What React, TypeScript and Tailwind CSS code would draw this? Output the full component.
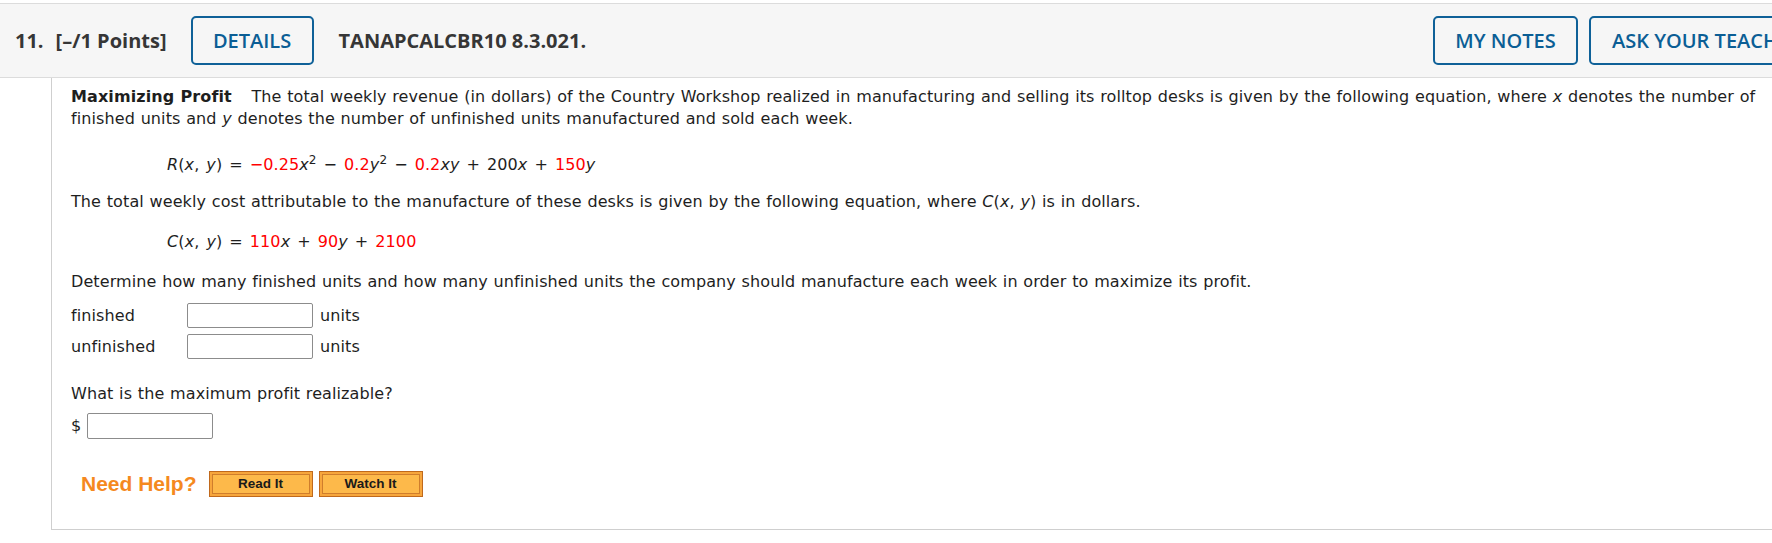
import React from "react";

function HelpButton({ label }: { label: string }) {
  return (
    <div className="h-[26px] w-[104px] border border-[#c0691c] bg-[#f7a63c] p-[2px]">
      <div className="flex h-full w-full items-center justify-center border border-[#cf7d2c] bg-[#fdb94a] text-[13.5px] font-bold leading-none text-[#1a1a1a]">
        {label}
      </div>
    </div>
  );
}

function Field({ label }: { label: string }) {
  return (
    <div className="flex items-center">
      <div className="w-[116px] leading-[22px]">{label}</div>
      <input
        type="text"
        readOnly
        className="h-[25px] w-[126px] rounded-[2px] border border-[#8c8c8c] bg-white outline-none"
      />
      <span className="ml-[7px] leading-[22px]">units</span>
    </div>
  );
}

const R = "text-[#ff0000]";

export default function App() {
  return (
    <div className="h-[543px] w-full overflow-hidden bg-white">
      <div className="w-[1900px] pt-[3px]">
        {/* Header bar */}
        <div className="flex h-[75px] items-center border-y border-[#dcdcdc] bg-[#f6f6f6] pl-[15px] pr-[61px] font-['Open_Sans',sans-serif] text-[20px] font-bold text-[#363636]">
          <span>11.</span>
          <span className="ml-[12px]">[–/1 Points]</span>
          <div className="ml-[24px] flex h-[49px] w-[123px] items-center justify-center rounded-[5px] border-2 border-[#0f6198] font-semibold text-[#0b5e95]">
            DETAILS
          </div>
          <span className="ml-[25px]">TANAPCALCBR10 8.3.021.</span>
          <div className="ml-auto flex gap-[11px] font-semibold text-[#0b5e95]">
            <div className="flex h-[49px] w-[145px] items-center justify-center rounded-[5px] border-2 border-[#0f6198]">
              MY NOTES
            </div>
            <div className="flex h-[49px] w-[250px] items-center whitespace-nowrap rounded-[5px] border-2 border-[#0f6198] pl-[21px]">
              ASK YOUR TEACHER
            </div>
          </div>
        </div>

        {/* Question body */}
        <div className="ml-[51px] border-b border-l border-[#cfcfcf] pb-[32px] pl-[19px] pt-[8px] font-['DejaVu_Sans',Verdana,sans-serif] text-[16px] leading-[22px] tracking-[0.1px] text-[#1e1e1e] [word-spacing:0.5px]">
          <p className="whitespace-nowrap">
            <b className="mr-[14px]">Maximizing Profit</b> The total weekly revenue (in dollars) of the Country
            Workshop realized in manufacturing and selling its rolltop desks is given by the following equation, where{" "}
            <i>x</i> denotes the number of
            <br />
            finished units and <i>y</i> denotes the number of unfinished units manufactured and sold each week.
          </p>

          <p className="mt-[24px] whitespace-nowrap pl-[96px] [word-spacing:1.8px]">
            <i>R</i>(<i>x</i>, <i>y</i>) = <span className={R}>−0.25</span>
            <i>x</i>
            <sup>2</sup> − <span className={R}>0.2</span>
            <i>y</i>
            <sup>2</sup> − <span className={R}>0.2</span>
            <i>xy</i> + 200<i>x</i> + <span className={R}>150</span>
            <i>y</i>
          </p>

          <p className="mt-[15px] whitespace-nowrap">
            The total weekly cost attributable to the manufacture of these desks is given by the following equation,
            where <i>C</i>(<i>x</i>, <i>y</i>) is in dollars.
          </p>

          <p className="mt-[18px] whitespace-nowrap pl-[96px] [word-spacing:1.8px]">
            <i>C</i>(<i>x</i>, <i>y</i>) = <span className={R}>110</span>
            <i>x</i> + <span className={R}>90</span>
            <i>y</i> + <span className={R}>2100</span>
          </p>

          <p className="mt-[18px] whitespace-nowrap">
            Determine how many finished units and how many unfinished units the company should manufacture each week in
            order to maximize its profit.
          </p>

          <div className="mt-[10px] flex flex-col gap-[6px]">
            <Field label="finished" />
            <Field label="unfinished" />
          </div>

          <p className="mt-[24px] whitespace-nowrap">What is the maximum profit realizable?</p>

          <div className="mt-[8px] flex items-center gap-[6px]">
            <span className="leading-[22px]">$</span>
            <input
              type="text"
              readOnly
              className="h-[26px] w-[126px] rounded-[2px] border border-[#8c8c8c] bg-white outline-none"
            />
          </div>

          <div className="mt-[32px] flex items-center pl-[10px] font-['Liberation_Sans',Arial,sans-serif] tracking-normal [word-spacing:0px]">
            <span className="mr-[12px] text-[21px] font-bold leading-[26px] text-[#f5891e]">Need Help?</span>
            <div className="flex gap-[6px]">
              <HelpButton label="Read It" />
              <HelpButton label="Watch It" />
            </div>
          </div>
        </div>
      </div>
    </div>
  );
}
